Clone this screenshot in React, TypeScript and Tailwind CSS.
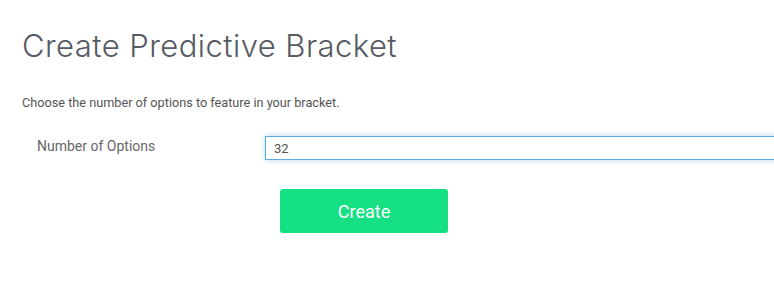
export default function App() {
  return (
    <div className="w-[774px] h-[289px] overflow-hidden bg-white font-['Roboto',sans-serif]">
      <div className="pl-[22px] pt-[25px]">
        <h1 className="font-['Inter',sans-serif] font-light text-[31px] leading-[42px] text-[#555a63] tracking-[0.45px]">
          Create Predictive Bracket
        </h1>
        <p className="mt-[27px] text-[12.7px] leading-[18px] text-[#555]">
          Choose the number of options to feature in your bracket.
        </p>
      </div>

      <div className="mt-[24px] flex items-start">
        <label className="w-[265px] shrink-0 pl-[37px] pt-[1px] text-[14px] leading-[18px] text-[#666]">
          Number of Options
        </label>
        <input
          type="text"
          defaultValue="32"
          className="w-[540px] shrink-0 h-[24px] px-[8px] text-[13px] text-[#555] border border-[#5aafe3] shadow-[0_0_6px_rgba(90,175,227,0.45)] outline-none"
        />
      </div>

      <div className="mt-[29px] pl-[280px]">
        <button className="w-[168px] h-[44px] rounded-[3px] bg-[#15e084] text-white text-[18px] font-['Roboto',sans-serif]">
          Create
        </button>
      </div>
    </div>
  );
}
